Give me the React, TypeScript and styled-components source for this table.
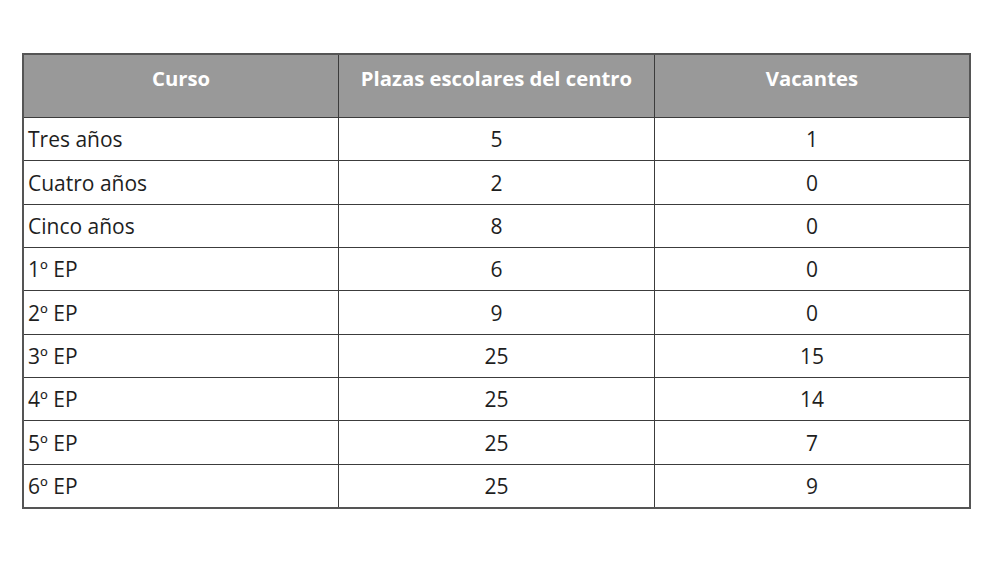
import React from 'react';
import styled, { createGlobalStyle } from 'styled-components';

const GlobalStyle = createGlobalStyle`
  html, body {
    margin: 0;
    padding: 0;
    background: #fff;
  }
`;

const Page = styled.div`
  padding: 53px 0 0 22px;
  font-family: 'Open Sans', Lato, sans-serif;
`;

const Table = styled.table`
  width: 949px;
  border-collapse: collapse;
  table-layout: fixed;
  border: 2px solid #555;
`;

const HeadCell = styled.th`
  height: 46px;
  background: #999999;
  color: #fff;
  font-weight: 700;
  font-size: 20.3px;
  text-align: center;
  border: 1.5px solid #3c3c3c;
  padding: 0 0 16px;
`;

const Cell = styled.td<{ $left?: boolean }>`
  height: 42.35px;
  padding: 0 0 0 ${(p) => (p.$left ? '4px' : '0')};
  text-align: ${(p) => (p.$left ? 'left' : 'center')};
  font-size: 21px;
  color: #1e1e1e;
  border: 1.5px solid #3c3c3c;
`;

const rows: [string, number, number][] = [
  ['Tres años', 5, 1],
  ['Cuatro años', 2, 0],
  ['Cinco años', 8, 0],
  ['1º EP', 6, 0],
  ['2º EP', 9, 0],
  ['3º EP', 25, 15],
  ['4º EP', 25, 14],
  ['5º EP', 25, 7],
  ['6º EP', 25, 9],
];

const App = () => (
  <>
    <GlobalStyle />
    <Page>
      <Table>
        <thead>
          <tr>
            <HeadCell>Curso</HeadCell>
            <HeadCell>Plazas escolares del centro</HeadCell>
            <HeadCell>Vacantes</HeadCell>
          </tr>
        </thead>
        <tbody>
          {rows.map(([curso, plazas, vacantes]) => (
            <tr key={curso}>
              <Cell $left>{curso}</Cell>
              <Cell>{plazas}</Cell>
              <Cell>{vacantes}</Cell>
            </tr>
          ))}
        </tbody>
      </Table>
    </Page>
  </>
);

export default App;
